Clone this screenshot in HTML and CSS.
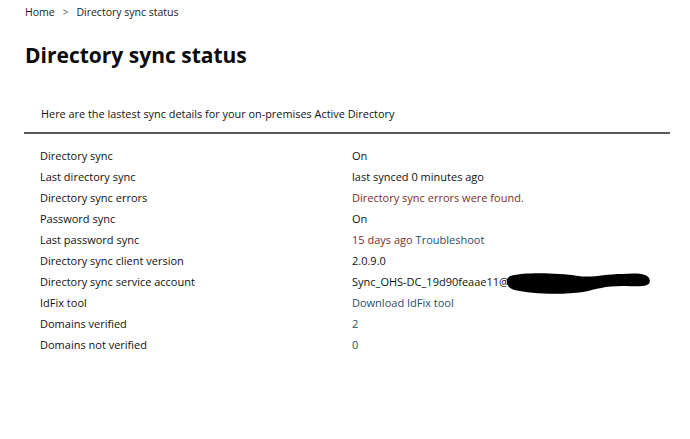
FILE: index.html
```html
<!DOCTYPE html>
<html>
<head>
<meta charset="utf-8">
<link rel="stylesheet" href="styles.css">
</head>
<body>
<nav class="breadcrumb">
  <span class="crumb">Home</span>
  <span class="sep">&gt;</span>
  <span class="crumb">Directory sync status</span>
</nav>
<h1 class="title">Directory sync status</h1>
<section class="panel">
  <div class="panel-head">Here are the lastest sync details for your on-premises Active Directory</div>
  <div class="details">
    <div class="label">Directory sync</div><div class="value">On</div>
    <div class="label">Last directory sync</div><div class="value">last synced 0 minutes ago</div>
    <div class="label">Directory sync errors</div><div class="value error">Directory sync errors were found.</div>
    <div class="label">Password sync</div><div class="value">On</div>
    <div class="label">Last password sync</div><div class="value"><span class="error">15 days ago</span> <span class="link">Troubleshoot</span></div>
    <div class="label">Directory sync client version</div><div class="value">2.0.9.0</div>
    <div class="label">Directory sync service account</div><div class="value account"><span>Sync_OHS-DC_19d90feaae11@</span><svg class="redact" width="148" height="26" viewBox="0 0 140 26" preserveAspectRatio="none"><path d="M6 6 C20 2 50 3 70 6 C85 8 95 4 112 4 C125 3 138 3 138 11 C138 18 126 16 112 16 C95 16 88 19 75 22 C55 25 25 24 10 20 C2 18 0 9 6 6 Z" fill="#000"/></svg></div>
    <div class="label">IdFix tool</div><div class="value link">Download IdFix tool</div>
    <div class="label">Domains verified</div><div class="value link">2</div>
    <div class="label">Domains not verified</div><div class="value link">0</div>
  </div>
</section>
</body>
</html>
```
FILE: styles.css
```css
html, body {
  margin: 0;
  padding: 0;
  background: #fff;
}
body {
  font-family: "Open Sans", "Noto Sans", sans-serif;
  color: #111;
  width: 690px;
  height: 439px;
  overflow: hidden;
}
.breadcrumb {
  display: flex;
  align-items: center;
  gap: 6px;
  padding: 3px 0 0 25px;
  height: 18px;
  font-size: 10.5px;
  color: #1a1a1a;
}
.sep {
  font-size: 10px;
  color: #555;
  margin: 0 2px;
}
.title {
  margin: 19px 0 0 25px;
  font-size: 21px;
  line-height: 30px;
  font-weight: 700;
  color: #0a0a0a;
}
.panel {
  margin: 36px 20px 0 24px;
}
.panel-head {
  padding: 0 0 10px 17px;
  font-size: 10.9px;
  line-height: 16px;
  border-bottom: 2px solid #5a5a5a;
  color: #111;
}
.details {
  display: grid;
  grid-template-columns: 312px 1fr;
  grid-auto-rows: 21px;
  align-items: center;
  padding: 11px 0 0 16px;
  font-size: 11px;
}
.value {
  display: flex;
  align-items: center;
  gap: 3px;
}
.error {
  color: #7b2d2d;
}
.link {
  color: #1d4f6b;
}
.account span {
  white-space: nowrap;
}
.redact {
  margin-left: -8px;
  margin-top: 2px;
}
```
